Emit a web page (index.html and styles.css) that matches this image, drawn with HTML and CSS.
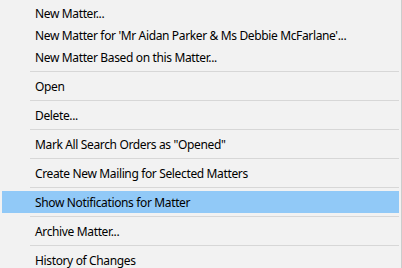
FILE: index.html
```html
<!DOCTYPE html>
<html>
<head>
<meta charset="utf-8">
<link rel="stylesheet" href="styles.css">
</head>
<body>
<div class="menu">
  <div class="item">New Matter...</div>
  <div class="item">New Matter for 'Mr Aidan Parker &amp; Ms Debbie McFarlane'...</div>
  <div class="item">New Matter Based on this Matter...</div>
  <div class="sep"></div>
  <div class="item">Open</div>
  <div class="sep"></div>
  <div class="item">Delete...</div>
  <div class="sep"></div>
  <div class="item">Mark All Search Orders as "Opened"</div>
  <div class="sep"></div>
  <div class="item">Create New Mailing for Selected Matters</div>
  <div class="sep"></div>
  <div class="item active">Show Notifications for Matter</div>
  <div class="sep"></div>
  <div class="item">Archive Matter...</div>
  <div class="sep"></div>
  <div class="item">History of Changes</div>
</div>
</body>
</html>
```
FILE: styles.css
```css
html, body {
  margin: 0;
  padding: 0;
  background: #f2f2f2;
  overflow: hidden;
}
.menu {
  width: 397px;
  height: 266px;
  padding: 2px 2px 0 2px;
  border-right: 1px solid #cccccc;
  background: #f2f2f2;
  display: flex;
  flex-direction: column;
  font-family: "Noto Sans", "Open Sans", sans-serif;
  font-size: 12px;
  letter-spacing: -0.36px;
  color: #000;
  overflow: hidden;
}
.item {
  flex: none;
  height: 22px;
  line-height: 23px;
  padding-left: 33px;
  white-space: nowrap;
}
.item.active {
  background: #91c9f7;
}
.sep {
  flex: none;
  height: 1px;
  margin: 3px 0 3px 28px;
  background: #d7d7d7;
}
```
